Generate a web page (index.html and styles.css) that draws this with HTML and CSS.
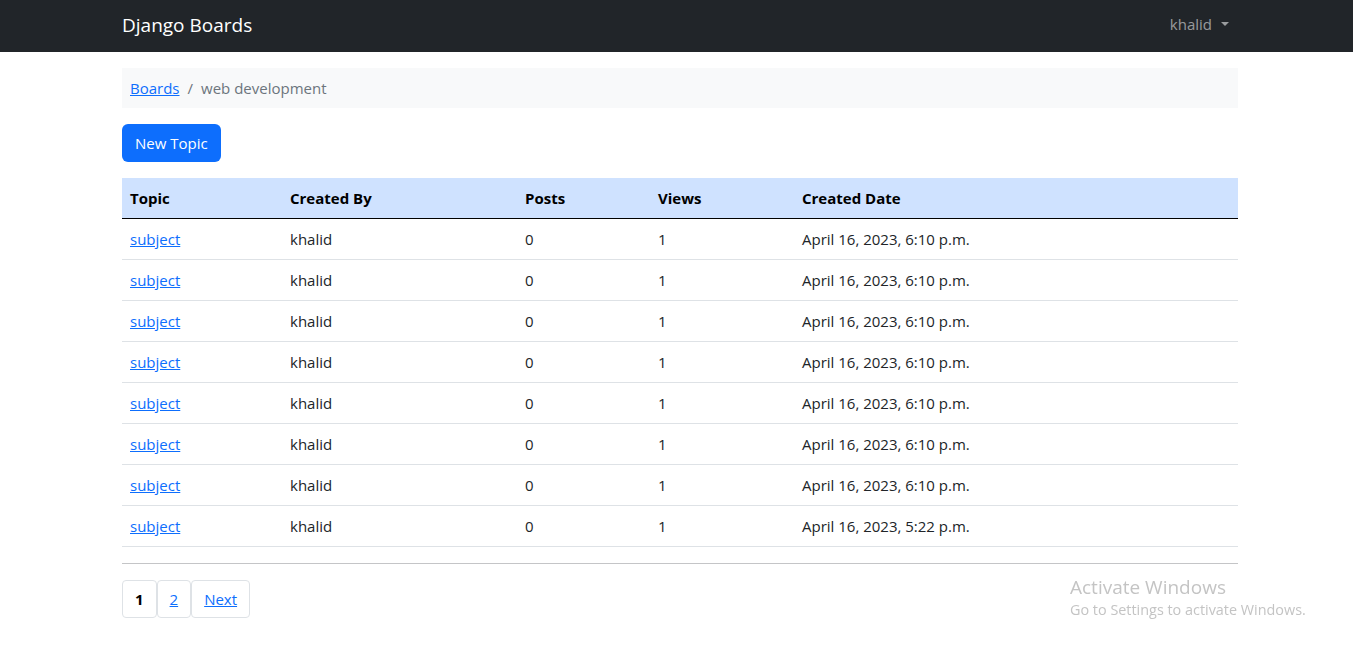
FILE: index.html
```html
<!DOCTYPE html>
<html lang="en">
<head>
<meta charset="utf-8">
<title>Django Boards</title>
<link rel="stylesheet" href="styles.css">
</head>
<body>
<nav class="navbar">
  <div class="container nav-inner">
    <a class="brand" href="#">Django Boards</a>
    <a class="user" href="#">khalid <span class="caret"></span></a>
  </div>
</nav>
<main class="container">
  <ol class="breadcrumb">
    <li><a href="#">Boards</a></li>
    <li class="sep">/</li>
    <li class="current">web development</li>
  </ol>
  <div class="actions"><a class="btn" href="#">New Topic</a></div>
  <table class="topics">
    <thead>
      <tr>
        <th class="c1">Topic</th>
        <th class="c2">Created By</th>
        <th class="c3">Posts</th>
        <th class="c4">Views</th>
        <th class="c5">Created Date</th>
      </tr>
    </thead>
    <tbody>
      <tr><td><a href="#">subject</a></td><td>khalid</td><td>0</td><td>1</td><td>April 16, 2023, 6:10 p.m.</td></tr>
      <tr><td><a href="#">subject</a></td><td>khalid</td><td>0</td><td>1</td><td>April 16, 2023, 6:10 p.m.</td></tr>
      <tr><td><a href="#">subject</a></td><td>khalid</td><td>0</td><td>1</td><td>April 16, 2023, 6:10 p.m.</td></tr>
      <tr><td><a href="#">subject</a></td><td>khalid</td><td>0</td><td>1</td><td>April 16, 2023, 6:10 p.m.</td></tr>
      <tr><td><a href="#">subject</a></td><td>khalid</td><td>0</td><td>1</td><td>April 16, 2023, 6:10 p.m.</td></tr>
      <tr><td><a href="#">subject</a></td><td>khalid</td><td>0</td><td>1</td><td>April 16, 2023, 6:10 p.m.</td></tr>
      <tr><td><a href="#">subject</a></td><td>khalid</td><td>0</td><td>1</td><td>April 16, 2023, 6:10 p.m.</td></tr>
      <tr><td><a href="#">subject</a></td><td>khalid</td><td>0</td><td>1</td><td>April 16, 2023, 5:22 p.m.</td></tr>
    </tbody>
  </table>
  <hr class="divider">
  <ul class="pagination">
    <li class="page active"><span>1</span></li>
    <li class="page"><a href="#">2</a></li>
    <li class="page"><a href="#">Next</a></li>
  </ul>
</main>
<div class="watermark">
  <div class="wm-title">Activate Windows</div>
  <div class="wm-sub">Go to Settings to activate Windows.</div>
</div>
</body>
</html>
```
FILE: styles.css
```css
* { box-sizing: border-box; }
html, body { margin: 0; padding: 0; }
body {
  font-family: "Open Sans", "Noto Sans", sans-serif;
  font-size: 15px;
  line-height: 24px;
  color: #212529;
  background: #fff;
}
a { color: #0d6efd; text-decoration: underline; }
.container { width: 1116px; margin: 0 0 0 122px; }

.navbar { background: #212529; height: 52px; }
.nav-inner { display: flex; align-items: center; justify-content: space-between; height: 52px; }
.brand { color: #fff; text-decoration: none; font-size: 19px; line-height: 30px; padding-bottom: 2px; }
.user { color: rgba(255,255,255,.55); text-decoration: none; padding: 8px 9px 8px 8px; display: flex; align-items: center; margin-top: -4px; }
.caret { display: inline-block; margin-left: 9px; width: 0; height: 0; border-top: 4px solid rgba(255,255,255,.55); border-left: 4px solid transparent; border-right: 4px solid transparent; }

.breadcrumb { list-style: none; margin: 16px 0 16px; padding: 8px 8px; background: #f8f9fa; display: flex; height: 40px; }
.breadcrumb li { margin: 0; }
.breadcrumb .sep { color: #6c757d; padding: 0 8px; }
.breadcrumb .current { color: #6c757d; }

.actions { margin-bottom: 16px; }
.btn { display: inline-block; background: #0d6efd; color: #fff; text-decoration: none; padding: 7px 13px; border-radius: 6px; height: 38px; }

.topics { width: 100%; border-collapse: collapse; margin-bottom: 16px; }
.topics th, .topics td { text-align: left; padding: 8px; }
.topics thead th { background: #cfe2ff; font-weight: 700; height: 40px; border-bottom: 1px solid #000; color: #000; }
.topics td { border-bottom: 1px solid #dee2e6; height: 41px; }
.c1 { width: 160px; }
.c2 { width: 235px; }
.c3 { width: 133px; }
.c4 { width: 144px; }

.divider { border: 0; border-top: 1px solid #c4c5c7; margin: 0 0 16px; }

.pagination { list-style: none; margin: 0; padding: 0; display: flex; }
.page { border: 1px solid #dee2e6; border-radius: 4px; height: 38px; }
.page a, .page span { display: block; padding: 6px 12px; }
.page.active span { font-weight: 700; color: #000; }

.watermark { position: fixed; left: 1070px; top: 574px; color: #c4c4c4; font-family: "Open Sans", "Noto Sans", sans-serif; }
.wm-title { font-size: 19px; line-height: 26px; }
.wm-sub { font-size: 14.4px; line-height: 20px; }
```
